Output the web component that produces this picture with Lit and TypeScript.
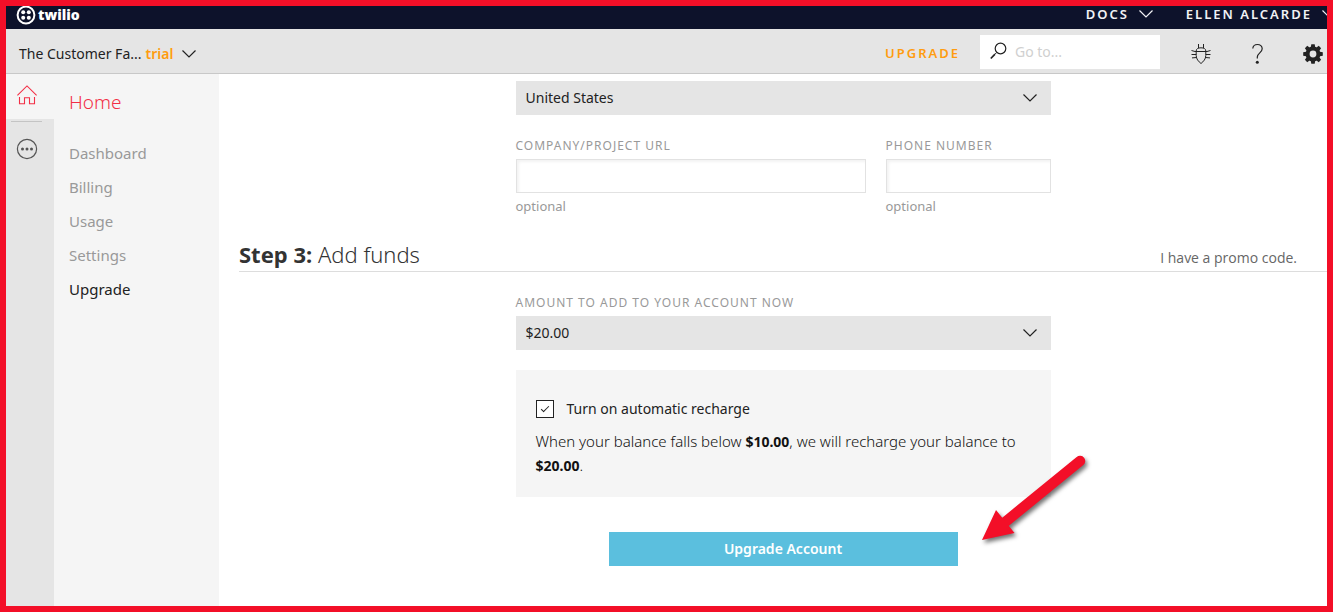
import { LitElement, html, css, svg } from "lit";
import { customElement, property, state } from "lit/decorators.js";
import { classMap } from "lit/directives/class-map.js";

const chevron = html`
  <svg class="chevron" width="16" height="10" viewBox="0 0 16 10" aria-hidden="true">
    <path d="M1.5 1.5 8 8l6.5-6.5" fill="none" stroke="currentColor" stroke-width="1.2" />
  </svg>
`;

const gearTeeth = [0, 45, 90, 135, 180, 225, 270, 315].map(
  (angle) => svg`<path d="M7.6 4.5 8.3 .2h3.4l.7 4.3z" transform="rotate(${angle} 10 10)" />`,
);

@customElement("top-bar")
class TopBar extends LitElement {
  static styles = css`
    :host {
      display: flex;
      justify-content: space-between;
      height: 23px;
      overflow: hidden;
      padding-left: 10px;
      background: #0d122b;
      color: #fff;
    }
    .brand {
      display: flex;
      align-items: center;
      gap: 2px;
      height: 18px;
      color: inherit;
      text-decoration: none;
      font: 800 14px/18px "Open Sans", sans-serif;
    }
    .menus {
      display: flex;
      gap: 32px;
      margin-right: -10px;
    }
    .menu {
      display: flex;
      align-items: center;
      gap: 9px;
      height: 16px;
      padding: 0;
      border: 0;
      background: none;
      color: #f2f2f5;
      font: 600 13px/16px "Noto Sans", sans-serif;
      letter-spacing: 2px;
      white-space: nowrap;
    }
  `;

  render() {
    return html`
      <a class="brand" href="#">
        <svg width="20" height="20" viewBox="0 0 20 20" fill="currentColor" aria-hidden="true">
          <circle cx="10" cy="10" r="8.4" fill="none" stroke="currentColor" stroke-width="2" />
          <circle cx="7.2" cy="7.2" r="2" />
          <circle cx="12.8" cy="7.2" r="2" />
          <circle cx="7.2" cy="12.8" r="2" />
          <circle cx="12.8" cy="12.8" r="2" />
        </svg>
        twilio
      </a>
      <nav class="menus">
        <button class="menu">DOCS ${chevron}</button>
        <button class="menu">ELLEN ALCARDE ${chevron}</button>
      </nav>
    `;
  }
}

@customElement("project-bar")
class ProjectBar extends LitElement {
  static styles = css`
    :host {
      display: flex;
      align-items: center;
      justify-content: space-between;
      height: 44px;
      padding: 0 4px 0 13px;
      background: #e5e5e5;
      border-bottom: 1px solid #c8c8c8;
      color: #222;
    }
    button {
      padding: 0;
      border: 0;
      background: none;
      color: inherit;
      font: inherit;
    }
    .project {
      display: flex;
      align-items: center;
      gap: 4px;
      padding-top: 6px;
      font-size: 14px;
      line-height: 20px;
    }
    .project .chevron {
      margin-left: 4px;
    }
    .trial {
      color: #ff9c0f;
      font-weight: 600;
    }
    .tools {
      display: flex;
      align-items: center;
    }
    .upgrade {
      margin-right: 20px;
      padding-top: 4px;
      color: #ff9c0f;
      font-size: 13px;
      font-weight: 600;
      letter-spacing: 2px;
      text-decoration: none;
    }
    .search {
      display: flex;
      align-items: center;
      gap: 8px;
      width: 180px;
      height: 34px;
      margin: 2px 31px 0 0;
      padding: 0 9px;
      box-sizing: border-box;
      background: #fff;
    }
    .search svg {
      margin-bottom: 2px;
    }
    .search input {
      flex: 1;
      min-width: 0;
      padding: 0 0 2px;
      border: 0;
      outline: 0;
      background: none;
      font: inherit;
      font-size: 14px;
    }
    .search input::placeholder {
      color: #d0d0d0;
    }
    .icons {
      display: flex;
      align-items: center;
      gap: 36px;
      padding-top: 6px;
    }
    .icons button,
    .icons svg {
      display: block;
    }
  `;

  render() {
    return html`
      <button class="project">
        <span>The Customer Fa...</span><span class="trial">trial</span>${chevron}
      </button>
      <div class="tools">
        <a class="upgrade" href="#upgrade">UPGRADE</a>
        <label class="search">
          <svg width="18" height="18" viewBox="0 0 18 18" fill="none" stroke="#222" aria-hidden="true">
            <circle cx="11.5" cy="6.5" r="5.3" stroke-width="1.2" />
            <path d="M7.7 10.5 6 12.2" stroke-width="1" />
            <path d="M6 12.2 1.8 16.5" stroke-width="1.7" />
          </svg>
          <input type="text" placeholder="Go to..." aria-label="Go to" />
        </label>
        <div class="icons">
          <button aria-label="Debugger">
            <svg width="20" height="22" viewBox="0 0 20 22" fill="none" stroke="#222" stroke-width="1">
              <path d="M7.5 1v4M12.5 1v4" />
              <path d="M5.2 8C5.2 5.8 7 4.8 10 4.8S14.8 5.8 14.8 8v4.5C14.8 16 12.5 18.5 10 20.5 7.5 18.5 5.2 16 5.2 12.500z" />
              <path d="M.5 7.5 4 8.5h12l3.500-1M.5 11.500H5.200M14.800 11.500H19.500M1 14.900 5.600 14.500M14.400 14.500 19 14.900" />
            </svg>
          </button>
          <button aria-label="Help">
            <svg width="20" height="22" viewBox="0 0 20 22" fill="none" stroke="#222" stroke-width="1.2">
              <path d="M5.800 5.500C6 2.800 7.800 1.500 10.500 1.500s4.700 1.600 4.700 4.300c0 3.900-4.900 4.200-4.900 8.200v1.500" />
              <circle cx="10.300" cy="19.300" r="1.500" fill="#222" stroke="none" />
            </svg>
          </button>
          <button aria-label="Settings">
            <svg width="20" height="20" viewBox="0 0 20 20" fill="#222">
              <circle cx="10" cy="10" r="5.4" fill="none" stroke="#222" stroke-width="4" />
              ${gearTeeth}
            </svg>
          </button>
        </div>
      </div>
    `;
  }
}

@customElement("side-nav")
class SideNav extends LitElement {
  static styles = css`
    :host {
      display: flex;
      width: 213px;
      flex: none;
      background: #f5f5f5;
    }
    .rail {
      width: 48px;
      background: #e5e5e5;
    }
    .rail button {
      display: grid;
      place-items: center;
      width: 100%;
      height: 45px;
      padding: 0 6px 4px 0;
      border: 0;
      background: none;
    }
    .rail .active {
      background: #f5f5f5;
    }
    .divider {
      width: 31px;
      margin: 2px 0 6px 5px;
      border: 0;
      border-top: 1px solid #c4c4c4;
    }
    .links {
      padding: 16px 15px;
    }
    h1 {
      margin: 0 0 27px;
      color: #f22f46;
      font-size: 19px;
      font-weight: 300;
      line-height: 24px;
    }
    ul {
      display: grid;
      gap: 10px;
      margin: 0;
      padding: 0;
      list-style: none;
    }
    a {
      display: block;
      color: #999;
      font-size: 15px;
      line-height: 24px;
      text-decoration: none;
    }
    a.current {
      color: #222;
    }
  `;

  render() {
    const links = ["Dashboard", "Billing", "Usage", "Settings", "Upgrade"];
    return html`
      <div class="rail">
        <button class="active" aria-label="Home">
          <svg width="20" height="20" viewBox="0 0 20 20" fill="none" stroke="#f22f46" stroke-width="1.1">
            <path d="M.4 10.4 10 .9l9.600 9.500" />
            <path d="M2.5 12v6.700H7.500V12.700h5v6H17.500V12" />
          </svg>
        </button>
        <hr class="divider" />
        <button aria-label="All products">
          <svg width="22" height="22" viewBox="0 0 22 22" fill="#555">
            <circle cx="11" cy="11" r="9.6" fill="none" stroke="#555" stroke-width="1.2" />
            <circle cx="6.5" cy="11" r="1.5" />
            <circle cx="11" cy="11" r="1.5" />
            <circle cx="15.5" cy="11" r="1.5" />
          </svg>
        </button>
      </div>
      <nav class="links">
        <h1>Home</h1>
        <ul>
          ${links.map(
            (name) => html`<li>
              <a href="#${name.toLowerCase()}" class=${classMap({ current: name === "Upgrade" })}>${name}</a>
            </li>`,
          )}
        </ul>
      </nav>
    `;
  }
}

@customElement("select-box")
class SelectBox extends LitElement {
  @property() label = "";
  @property() value = "";
  @property({ type: Boolean }) captioned = false;

  static styles = css`
    :host {
      display: block;
    }
    label {
      display: block;
      margin-bottom: 5px;
      color: #999;
      font-size: 12px;
      line-height: 16px;
      letter-spacing: 1px;
    }
    .box {
      display: grid;
      grid-template-columns: 1fr 42px;
      align-items: center;
      height: 34px;
      background: #e5e5e5;
      color: #222;
    }
    select {
      grid-area: 1 / 1 / 2 / 3;
      height: 34px;
      padding: 0 42px 2px 10px;
      border: 0;
      background: transparent;
      appearance: none;
      color: inherit;
      font: inherit;
      font-size: 14px;
    }
    .chevron {
      grid-area: 1 / 2;
      justify-self: center;
      pointer-events: none;
    }
  `;

  render() {
    return html`
      ${this.captioned ? html`<label for="choice">${this.label}</label>` : ""}
      <div class="box">
        <select id="choice" aria-label=${this.label}>
          <option>${this.value}</option>
        </select>
        ${chevron}
      </div>
    `;
  }
}

@customElement("upgrade-form")
class UpgradeForm extends LitElement {
  @state() private recharge = true;

  static styles = css`
    :host {
      display: block;
      flex: 1;
      min-width: 0;
      padding: 7px 0 0 20px;
    }
    .column {
      max-width: 535px;
      margin: 0 auto;
    }
    .fields {
      display: grid;
      grid-template-columns: 1fr 165px;
      gap: 20px;
      margin-top: 23px;
    }
    .field {
      display: grid;
      color: #999;
    }
    .field label {
      margin-bottom: 5px;
      font-size: 12px;
      line-height: 16px;
      letter-spacing: 1px;
    }
    .field input {
      width: 100%;
      height: 34px;
      box-sizing: border-box;
      padding: 0 9px;
      border: 1px solid #e2e2e2;
      box-shadow: inset 2px 2px 3px #f3f3f3;
      font: inherit;
      font-size: 14px;
    }
    .hint {
      margin-top: 5px;
      font-size: 13px;
      line-height: 16px;
    }
    .step {
      display: flex;
      align-items: baseline;
      justify-content: space-between;
      margin: 24px 0 23px;
      padding: 0 30px 1px 0;
      border-bottom: 1px solid #ddd;
    }
    h2 {
      margin: 0;
      color: #333;
      font-size: 22px;
      font-weight: 300;
      line-height: 32px;
    }
    h2 strong {
      font-weight: 700;
    }
    .promo {
      color: #666;
      font-family: "Open Sans", sans-serif;
      font-size: 14px;
      line-height: 16px;
      text-decoration: none;
    }
    .panel {
      margin-top: 20px;
      padding: 27px 20px 20px;
      background: #f5f5f5;
      color: #111;
      font-size: 15px;
      font-weight: 300;
      line-height: 24px;
    }
    .toggle {
      display: flex;
      align-items: center;
      gap: 13px;
      font-size: 14px;
      font-weight: 400;
      color: #222;
    }
    .toggle input {
      display: grid;
      place-items: center;
      width: 18px;
      height: 18px;
      margin: 0;
      border: 1px solid #222;
      background: #fff;
      appearance: none;
    }
    .toggle input:checked::before {
      content: "";
      width: 7px;
      height: 3px;
      margin-bottom: 3px;
      border: solid #222;
      border-width: 0 0 1px 1px;
      rotate: -45deg;
    }
    p {
      margin: 8px 0 0;
    }
    p strong {
      font-size: 14px;
      font-weight: 700;
      line-height: 16px;
    }
    .actions {
      position: relative;
      max-width: 349px;
      margin: 35px auto 0;
    }
    .submit {
      display: block;
      width: 100%;
      height: 34px;
      padding: 0 0 2px;
      border: 0;
      background: #5bbfde;
      color: #fff;
      font: inherit;
      font-size: 14px;
      font-weight: 600;
    }
    .pointer {
      position: absolute;
      left: calc(100% + 18px);
      bottom: 14px;
      filter: drop-shadow(2px 3px 2px rgb(0 0 0 / 55%));
    }
  `;

  render() {
    return html`
      <div class="column">
        <select-box label="Country" value="United States"></select-box>
        <div class="fields">
          <div class="field">
            <label for="url">COMPANY/PROJECT URL</label>
            <input id="url" type="url" />
            <span class="hint">optional</span>
          </div>
          <div class="field">
            <label for="phone">PHONE NUMBER</label>
            <input id="phone" type="tel" />
            <span class="hint">optional</span>
          </div>
        </div>
      </div>
      <header class="step">
        <h2><strong>Step 3:</strong> Add funds</h2>
        <a class="promo" href="#promo">I have a promo code.</a>
      </header>
      <div class="column">
        <select-box captioned label="AMOUNT TO ADD TO YOUR ACCOUNT NOW" value="$20.00"></select-box>
        <section class="panel">
          <label class="toggle">
            <input
              type="checkbox"
              .checked=${this.recharge}
              @change=${(e: Event) => (this.recharge = (e.target as HTMLInputElement).checked)}
            />
            Turn on automatic recharge
          </label>
          <p>
            When your balance falls below <strong>$10.00</strong>, we will recharge your balance to
            <strong>$20.00</strong>.
          </p>
        </section>
        <div class="actions">
          <button class="submit">Upgrade Account</button>
          <svg class="pointer" width="116" height="102" viewBox="0 0 116 102" fill="#f30f28" aria-hidden="true">
            <path d="M104 11 28 73" stroke="#f30f28" stroke-width="10.5" stroke-linecap="round" />
            <path d="M6 90 20 60 38.5 83z" />
          </svg>
        </div>
      </div>
    `;
  }
}

@customElement("app-root")
class AppRoot extends LitElement {
  static styles = css`
    :host {
      display: flex;
      flex-direction: column;
      min-height: 100vh;
      box-sizing: border-box;
      overflow: hidden;
      border: 6px solid #f30f28;
      background: #fff;
      font-family: "Noto Sans", "Open Sans", sans-serif;
    }
    .body {
      display: flex;
      flex: 1;
    }
  `;

  render() {
    return html`
      <top-bar></top-bar>
      <project-bar></project-bar>
      <div class="body">
        <side-nav></side-nav>
        <upgrade-form></upgrade-form>
      </div>
    `;
  }
}
